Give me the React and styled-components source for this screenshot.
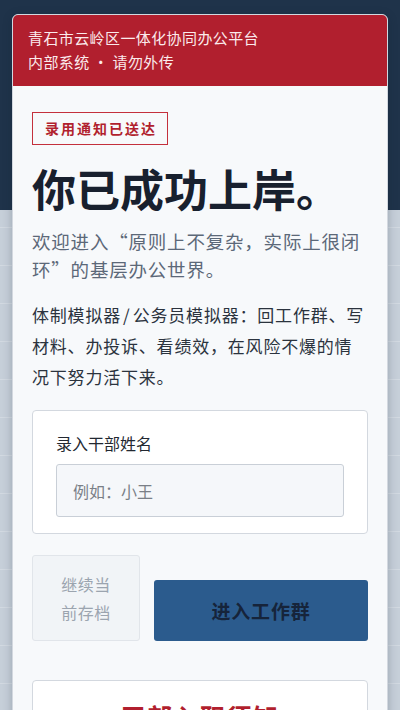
import React from "react";
import styled, { createGlobalStyle } from "styled-components";

const Global = createGlobalStyle`
  html, body { margin: 0; padding: 0; }
  body {
    font-family: "Noto Sans CJK SC", "Noto Sans", sans-serif;
    background-color: #c6cfd9;
    background-image:
      linear-gradient(#1f334a, #1f334a),
      repeating-linear-gradient(180deg, #c6cfd9 0px, #c6cfd9 37px, #d2d9e1 37px, #d2d9e1 38px);
    background-size: 100% 210px, 100% 100%;
    background-repeat: no-repeat, repeat;
    min-height: 710px;
    overflow: hidden;
  }
`;

const Page = styled.div`
  padding: 14px 12px 0;
`;

const Card = styled.div`
  background: #f7f9fb;
  border: 1px solid #d3d8df;
  border-radius: 6px;
  overflow: hidden;
  box-shadow: 0 2px 10px rgba(15, 30, 50, 0.25);
`;

const Header = styled.div`
  background: #b11f2e;
  padding: 11px 15px 12px;
  color: #fbeaec;
  font-size: 15px;
  line-height: 24px;
  letter-spacing: 0.4px;
`;

const Body = styled.div`
  padding: 26px 19px 30px;
  display: flex;
  flex-direction: column;
`;

const Badge = styled.div`
  align-self: flex-start;
  border: 1px solid #c4303c;
  color: #b11f2e;
  font-weight: 700;
  font-size: 14px;
  line-height: 21px;
  letter-spacing: 2px;
  padding: 5px 10px 5px 12px;
`;

const Title = styled.h1`
  margin: 14px 0 0;
  font-size: 44px;
  line-height: 58px;
  font-weight: 700;
  color: #18202e;
  letter-spacing: 0px;
`;

const Lead = styled.p`
  margin: 10px 0 0;
  font-size: 18.5px;
  line-height: 28px;
  letter-spacing: 0.8px;
  color: #5c6878;
`;

const Para = styled.p`
  margin: 16px -1px 0 0;
  font-size: 17px;
  line-height: 31px;
  letter-spacing: 0.8px;
  word-spacing: -2.5px;
  color: #2b333e;
`;

const FormBox = styled.div`
  margin-top: 18px;
  background: #ffffff;
  border: 1px solid #d3d8df;
  border-radius: 4px;
  padding: 20px 23px 16px;
`;

const Label = styled.div`
  font-size: 16px;
  line-height: 24px;
  color: #222831;
`;

const Input = styled.input`
  display: block;
  box-sizing: border-box;
  width: 100%;
  margin-top: 9px;
  height: 53px;
  background: #f5f7fa;
  border: 1px solid #c9cfd7;
  border-radius: 3px;
  padding: 0 16px;
  font-family: inherit;
  font-size: 16px;
  color: #222;
  outline: none;
  &::placeholder { color: #7a7f87; }
`;

const Actions = styled.div`
  margin-top: 21px;
  display: grid;
  grid-template-columns: 108px 1fr;
  gap: 14px;
  align-items: end;
`;

const GhostButton = styled.button`
  height: 86px;
  background: #f1f4f7;
  border: 1px solid #e1e5ea;
  border-radius: 3px;
  color: #9ba4af;
  font-family: inherit;
  font-size: 16px;
  line-height: 28px;
  letter-spacing: 0.5px;
  padding: 0 24px;
`;

const PrimaryButton = styled.button`
  height: 61px;
  background: #2b5b8d;
  border: none;
  border-radius: 3px;
  color: #16243a;
  font-family: inherit;
  font-weight: 700;
  font-size: 19px;
  letter-spacing: 0.8px;
`;

const NoticeBox = styled.div`
  margin-top: 39px;
  background: #ffffff;
  border: 1px solid #d3d8df;
  border-radius: 4px;
  padding: 17px 16px;
  text-align: center;
  color: #b11f2e;
  font-weight: 700;
  font-size: 25px;
  letter-spacing: 1.5px;
  line-height: 36px;
`;

export default function App() {
  return (
    <>
      <Global />
      <Page>
        <Card>
          <Header>
            <div>青石市云岭区一体化协同办公平台</div>
            <div>内部系统 · 请勿外传</div>
          </Header>
          <Body>
            <Badge>录用通知已送达</Badge>
            <Title>你已成功上岸。</Title>
            <Lead>欢迎进入“原则上不复杂，实际上很闭环”的基层办公世界。</Lead>
            <Para>体制模拟器 / 公务员模拟器：回工作群、写材料、办投诉、看绩效，在风险不爆的情况下努力活下来。</Para>
            <FormBox>
              <Label>录入干部姓名</Label>
              <Input placeholder="例如：小王" />
            </FormBox>
            <Actions>
              <GhostButton>继续当前存档</GhostButton>
              <PrimaryButton>进入工作群</PrimaryButton>
            </Actions>
            <NoticeBox>干部入职须知</NoticeBox>
          </Body>
        </Card>
      </Page>
    </>
  );
}
